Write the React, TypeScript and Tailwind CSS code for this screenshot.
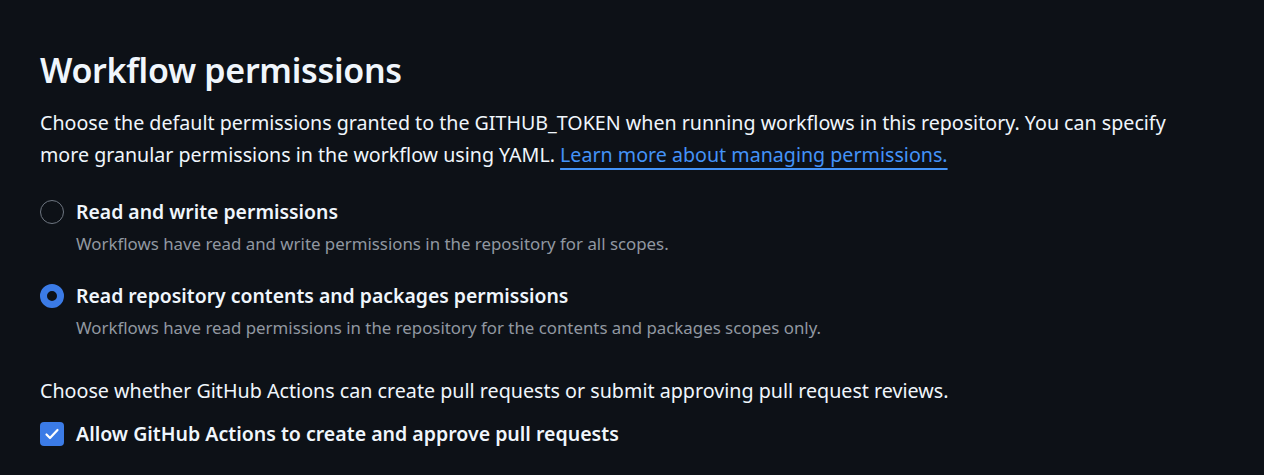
import React from "react";

export default function App() {
  return (
    <div
      className="w-[1264px] h-[475px] bg-[#0d1117] text-[#f0f6fc] overflow-hidden"
      style={{ fontFamily: '"Noto Sans", "Open Sans", sans-serif' }}
    >
      <div className="pl-[40px] pt-[50px]">
        <h2 className="text-[34px] leading-[40px] font-semibold tracking-[-0.3px]">Workflow permissions</h2>
        <p className="mt-[17px] text-[19.65px] leading-[32px]">
          Choose the default permissions granted to the GITHUB_TOKEN when running workflows in this repository. You can specify
          <br />
          more granular permissions in the workflow using YAML.{" "}
          <a href="#" className="text-[#4493f8] underline underline-offset-[6px] decoration-[2px]">
            Learn more about managing permissions.
          </a>
        </p>

        <div className="mt-[25px] flex flex-col gap-[20px]">
          <div className="flex gap-[12px]">
            <div className="h-[32px] flex items-center">
              <span className="block w-[24px] h-[24px] rounded-full border border-[#6e7681]" />
            </div>
            <div>
              <div className="text-[19.4px] leading-[32px] font-semibold">Read and write permissions</div>
              <div className="text-[16.85px] leading-[32px] text-[#9198a1]">
                Workflows have read and write permissions in the repository for all scopes.
              </div>
            </div>
          </div>
          <div className="flex gap-[12px]">
            <div className="h-[32px] flex items-center">
              <span className="block w-[24px] h-[24px] rounded-full border-[7px] border-[#3b7be6] bg-[#0d1117]" />
            </div>
            <div>
              <div className="text-[19.4px] leading-[32px] font-semibold">Read repository contents and packages permissions</div>
              <div className="text-[16.85px] leading-[32px] text-[#9198a1]">
                Workflows have read permissions in the repository for the contents and packages scopes only.
              </div>
            </div>
          </div>
        </div>

        <p className="mt-[31px] text-[19.7px] leading-[32px]">
          Choose whether GitHub Actions can create pull requests or submit approving pull request reviews.
        </p>
        <div className="mt-[11px] flex gap-[12px] items-center">
          <span className="w-[24px] h-[24px] rounded-[4px] bg-[#3b7be6] flex items-center justify-center">
            <svg width="16" height="16" viewBox="0 0 16 16" fill="none">
              <path d="M2.5 8.5 L6 12 L13.5 4" stroke="#ffffff" strokeWidth="2.2" strokeLinecap="round" strokeLinejoin="round" />
            </svg>
          </span>
          <span className="text-[19.55px] leading-[32px] font-semibold">Allow GitHub Actions to create and approve pull requests</span>
        </div>
      </div>
    </div>
  );
}
